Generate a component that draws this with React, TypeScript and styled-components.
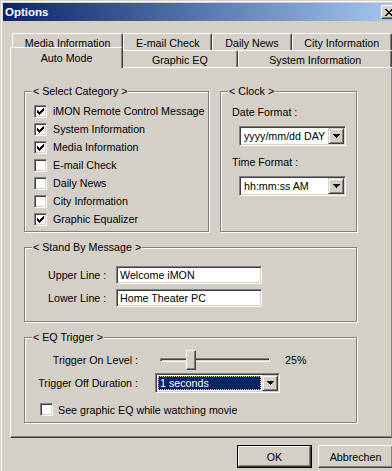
import React from 'react';
import styled, { createGlobalStyle } from 'styled-components';

const GlobalStyle = createGlobalStyle`
    html, body {
        margin: 0;
        padding: 0;
        background: #d4d0c8;
    }
    body {
        width: 392px;
        height: 471px;
        overflow: hidden;
        font-family: "Liberation Sans", Arial, sans-serif;
        font-size: 10.7px;
        color: #000;
    }
`;

const categories = [
    { label: 'iMON Remote Control Message', checked: true },
    { label: 'System Information', checked: true },
    { label: 'Media Information', checked: true },
    { label: 'E-mail Check', checked: false },
    { label: 'Daily News', checked: false },
    { label: 'City Information', checked: false },
    { label: 'Graphic Equalizer', checked: true },
];

const backTabs = ['Media Information', 'E-mail Check', 'Daily News', 'City Information'];
const frontTabs = ['Auto Mode', 'Graphic EQ', 'System Information'];

const CheckMark = () => (
    <svg width="7" height="7" viewBox="0 0 7 7" shapeRendering="crispEdges">
        <path
            fill="#000"
            d="M6 0h1v1H6z M5 1h2v1H5z M0 2h1v1H0z M4 2h3v1H4z M0 3h2v1H0z M3 3h3v1H3z M0 4h5v1H0z M1 5h3v1H1z M2 6h1v1H2z"
        />
    </svg>
);

const DownArrow = () => (
    <svg width="7" height="4" viewBox="0 0 7 4" shapeRendering="crispEdges">
        <path fill="#000" d="M0 0h7v1H0z M1 1h5v1H1z M2 2h3v1H2z M3 3h1v1H3z" />
    </svg>
);

const Check: React.FC<{ checked: boolean }> = ({ checked }) => (
    <CheckBox>{checked && <CheckMark />}</CheckBox>
);

const Combo: React.FC<{ value: string; width: number; selected?: boolean }> = ({ value, width, selected }) => (
    <ComboBox $width={width}>
        <ComboText $selected={selected}>{value}</ComboText>
        <DropButton>
            <DownArrow />
        </DropButton>
    </ComboBox>
);

const App: React.FC = () => {
    const level = 25;

    return (
        <>
            <GlobalStyle />
            <Window>
                <TitleBar>
                    <Caption>Options</Caption>
                    <CloseButton>
                        <svg width="8" height="7" viewBox="0 0 8 7" shapeRendering="crispEdges">
                            <path
                                fill="#000"
                                d="M0 0h2v1H0z M6 0h2v1H6z M1 1h2v1H1z M5 1h2v1H5z M2 2h4v1H2z M3 3h2v1H3z M2 4h4v1H2z M1 5h2v1H1z M5 5h2v1H5z M0 6h2v1H0z M6 6h2v1H6z"
                            />
                        </svg>
                    </CloseButton>
                </TitleBar>

                <Body>
                    <TabStrip>
                        <TabRow>
                            {backTabs.map(t => <Tab key={t}>{t}</Tab>)}
                        </TabRow>
                        <TabRow>
                            {frontTabs.map((t, i) => <Tab key={t} $active={i === 0}>{t}</Tab>)}
                        </TabRow>
                    </TabStrip>

                    <Panel>
                        <GroupRow>
                            <Group $width={185} $height={141}>
                                <Legend>{'< Select Category >'}</Legend>
                                <CheckList>
                                    {categories.map(c => (
                                        <CheckRow key={c.label}>
                                            <Check checked={c.checked} />
                                            {c.label}
                                        </CheckRow>
                                    ))}
                                </CheckList>
                            </Group>
                            <Group $width={137} $height={141}>
                                <Legend>{'< Clock >'}</Legend>
                                <ClockBody>
                                    <FieldLabel>Date Format :</FieldLabel>
                                    <ClockCombo>
                                        <Combo value="yyyy/mm/dd DAY" width={107} />
                                    </ClockCombo>
                                    <FieldLabel $gap={10}>Time Format :</FieldLabel>
                                    <ClockCombo>
                                        <Combo value="hh:mm:ss AM" width={107} />
                                    </ClockCombo>
                                </ClockBody>
                            </Group>
                        </GroupRow>

                        <Group $width={333} $height={75}>
                            <Legend>{'< Stand By Message >'}</Legend>
                            <StandByBody>
                                <InputRow>
                                    <LineLabel>Upper Line :</LineLabel>
                                    <TextInput>Welcome iMON</TextInput>
                                </InputRow>
                                <InputRow>
                                    <LineLabel>Lower Line :</LineLabel>
                                    <TextInput>Home Theater PC</TextInput>
                                </InputRow>
                            </StandByBody>
                        </Group>

                        <Group $width={333} $height={86}>
                            <Legend>{'< EQ Trigger >'}</Legend>
                            <EqBody>
                                <EqRow>
                                    <EqLabel>Trigger On Level :</EqLabel>
                                    <Slider>
                                        <Track />
                                        <Thumb style={{ left: Math.round((level / 100) * 100) + 1 }} />
                                    </Slider>
                                    <Percent>{level}%</Percent>
                                </EqRow>
                                <EqRow $top={3}>
                                    <EqLabel>Trigger Off Duration :</EqLabel>
                                    <DurationCombo>
                                        <Combo value="1 seconds" width={125} selected />
                                    </DurationCombo>
                                </EqRow>
                                <MovieRow>
                                    <Check checked={false} />
                                    See graphic EQ while watching movie
                                </MovieRow>
                            </EqBody>
                        </Group>
                    </Panel>

                    <ButtonRow>
                        <Button $default>OK</Button>
                        <Button>Abbrechen</Button>
                    </ButtonRow>
                </Body>
            </Window>
        </>
    );
};

export default App;

const Window = styled.div`
    width: 402px;
    height: 478px;
    box-sizing: border-box;
    padding: 2px;
    border: 1px solid;
    border-color: #d4d0c8 #404040 #404040 #d4d0c8;
    box-shadow: inset 1px 1px #fff, inset -1px -1px #808080;
    background: #d4d0c8;
    display: flex;
    flex-direction: column;
`;

const TitleBar = styled.div`
    height: 18px;
    flex: none;
    display: flex;
    align-items: center;
    justify-content: space-between;
    padding: 0 2px 0 2px;
    background: linear-gradient(to right, #0a246a, #a6caf0);
`;

const Caption = styled.div`
    color: #fff;
    font-weight: bold;
    font-size: 11.5px;
`;

const CloseButton = styled.div`
    width: 16px;
    height: 14px;
    box-sizing: border-box;
    display: flex;
    align-items: center;
    justify-content: center;
    background: #d4d0c8;
    border: 1px solid;
    border-color: #fff #404040 #404040 #fff;
    box-shadow: inset -1px -1px #808080;
`;

const Body = styled.div`
    padding: 12px 6px 0 7px;
    display: flex;
    flex-direction: column;
`;

const TabStrip = styled.div`
    display: flex;
    flex-direction: column;
    margin: 0 1px 0 2px;
`;

const TabRow = styled.div`
    display: flex;
    align-items: flex-end;
    height: 17px;
`;

const Tab = styled.div<{ $active?: boolean }>`
    flex: 1 1 auto;
    height: ${p => (p.$active ? '21px' : '17px')};
    margin: ${p => (p.$active ? '0 -2px -1px -2px' : '0')};
    position: relative;
    z-index: ${p => (p.$active ? 2 : 0)};
    box-sizing: border-box;
    display: flex;
    align-items: center;
    justify-content: center;
    padding-top: ${p => (p.$active ? '0' : '1px')};
    white-space: nowrap;
    background: #d4d0c8;
    border-top: 1px solid #fff;
    border-left: 1px solid #fff;
    border-right: 1px solid #404040;
    border-top-left-radius: 2px;
    border-top-right-radius: 2px;
    box-shadow: inset -1px 0 #808080;
`;

const Panel = styled.div`
    height: 371px;
    box-sizing: border-box;
    border: 1px solid;
    border-color: #fff #404040 #404040 #fff;
    box-shadow: inset -1px -1px #808080;
    padding: 23px 0 0 13px;
    display: flex;
    flex-direction: column;
    gap: 15px;
`;

const GroupRow = styled.div`
    display: flex;
    gap: 11px;
`;

const Group = styled.div<{ $width: number; $height: number }>`
    position: relative;
    width: ${p => p.$width}px;
    height: ${p => p.$height}px;
    box-sizing: border-box;
    border: 1px solid #808080;
    box-shadow: inset 1px 1px #fff, 1px 1px #fff;
`;

const Legend = styled.span`
    position: absolute;
    top: -7px;
    left: 7px;
    padding: 0 1px;
    line-height: 13px;
    background: #d4d0c8;
    white-space: nowrap;
`;

const CheckList = styled.div`
    display: flex;
    flex-direction: column;
    padding: 10px 0 0 9px;
`;

const CheckRow = styled.div`
    height: 18px;
    display: flex;
    align-items: center;
    gap: 6px;
    white-space: nowrap;
`;

const CheckBox = styled.div`
    width: 13px;
    height: 13px;
    flex: none;
    box-sizing: border-box;
    display: flex;
    align-items: center;
    justify-content: center;
    background: #fff;
    border: 1px solid;
    border-color: #808080 #fff #fff #808080;
    box-shadow: inset 1px 1px #404040, inset -1px -1px #d4d0c8;
`;

const ClockBody = styled.div`
    display: flex;
    flex-direction: column;
    padding: 14px 0 0 11px;
`;

const FieldLabel = styled.div<{ $gap?: number }>`
    line-height: 13px;
    margin-top: ${p => p.$gap ?? 0}px;
`;

const ClockCombo = styled.div`
    margin: 7px 0 0 7px;
`;

const ComboBox = styled.div<{ $width: number }>`
    width: ${p => p.$width}px;
    height: 20px;
    box-sizing: border-box;
    display: flex;
    align-items: stretch;
    padding: 1px;
    background: #fff;
    border: 1px solid;
    border-color: #808080 #fff #fff #808080;
    box-shadow: inset 1px 1px #404040, inset -1px -1px #d4d0c8;
`;

const ComboText = styled.div<{ $selected?: boolean }>`
    flex: 1;
    display: flex;
    align-items: center;
    padding-left: 2px;
    margin: 1px 1px 1px 1px;
    overflow: hidden;
    white-space: nowrap;
    background: ${p => (p.$selected ? '#0a246a' : 'transparent')};
    color: ${p => (p.$selected ? '#fff' : '#000')};
    outline: ${p => (p.$selected ? '1px dotted #d4c880' : 'none')};
    outline-offset: -1px;
`;

const DropButton = styled.div`
    width: 16px;
    flex: none;
    box-sizing: border-box;
    display: flex;
    align-items: center;
    justify-content: center;
    background: #d4d0c8;
    border: 1px solid;
    border-color: #d4d0c8 #404040 #404040 #d4d0c8;
    box-shadow: inset 1px 1px #fff, inset -1px -1px #808080;
`;

const StandByBody = styled.div`
    display: flex;
    flex-direction: column;
    gap: 5px;
    padding: 18px 0 0 23px;
`;

const InputRow = styled.div`
    display: flex;
    align-items: center;
`;

const LineLabel = styled.div`
    width: 68px;
    flex: none;
`;

const TextInput = styled.div`
    width: 146px;
    height: 18px;
    box-sizing: border-box;
    display: flex;
    align-items: center;
    padding-left: 3px;
    background: #fff;
    border: 1px solid;
    border-color: #808080 #fff #fff #808080;
    box-shadow: inset 1px 1px #404040, inset -1px -1px #d4d0c8;
    white-space: nowrap;
`;

const EqBody = styled.div`
    display: flex;
    flex-direction: column;
    padding-top: 12px;
`;

const EqRow = styled.div<{ $top?: number }>`
    display: flex;
    align-items: center;
    height: 20px;
    margin-top: ${p => p.$top ?? 0}px;
`;

const EqLabel = styled.div`
    width: 113px;
    flex: none;
    text-align: right;
    white-space: nowrap;
`;

const Slider = styled.div`
    position: relative;
    width: 110px;
    height: 20px;
    margin-left: 22px;
    display: flex;
    align-items: center;
`;

const Track = styled.div`
    width: 100%;
    height: 4px;
    box-sizing: border-box;
    border: 1px solid;
    border-color: #808080 #fff #fff #808080;
    box-shadow: inset 1px 1px #404040, inset -1px -1px #d4d0c8;
`;

const Thumb = styled.div`
    position: absolute;
    top: 0;
    width: 10px;
    height: 20px;
    box-sizing: border-box;
    background: #d4d0c8;
    border: 1px solid;
    border-color: #fff #404040 #404040 #fff;
    box-shadow: inset -1px -1px #808080;
`;

const Percent = styled.div`
    margin-left: 15px;
`;

const DurationCombo = styled.div`
    margin-left: 17px;
`;

const MovieRow = styled.div`
    display: flex;
    align-items: center;
    gap: 5px;
    margin: 10px 0 0 15px;
    white-space: nowrap;
`;

const ButtonRow = styled.div`
    display: flex;
    justify-content: flex-end;
    gap: 6px;
    margin-top: 7px;
`;

const Button = styled.div<{ $default?: boolean }>`
    width: 75px;
    height: 23px;
    box-sizing: border-box;
    display: flex;
    align-items: center;
    justify-content: center;
    background: #d4d0c8;
    border: 1px solid;
    border-color: ${p => (p.$default ? '#000' : '#fff #404040 #404040 #fff')};
    box-shadow: ${p =>
        p.$default
            ? 'inset -1px -1px #404040, inset 1px 1px #fff, inset -2px -2px #808080'
            : 'inset -1px -1px #808080'};
`;
